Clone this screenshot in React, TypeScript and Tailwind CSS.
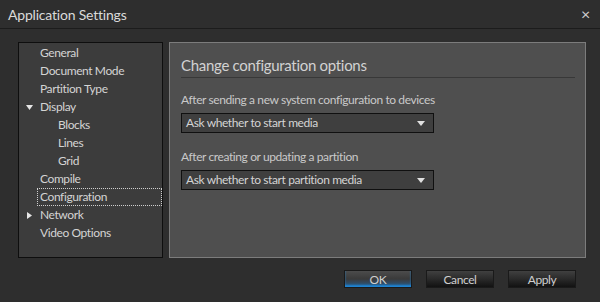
import React from "react";

// Tree entries for the left navigation pane
interface TreeItem {
    id: number;
    name: string;
    level: number;
    arrow?: "down" | "right";
    focused?: boolean;
}

const treeItems: TreeItem[] = [
    { id: 1, name: "General", level: 0 },
    { id: 2, name: "Document Mode", level: 0 },
    { id: 3, name: "Partition Type", level: 0 },
    { id: 4, name: "Display", level: 0, arrow: "down" },
    { id: 5, name: "Blocks", level: 1 },
    { id: 6, name: "Lines", level: 1 },
    { id: 7, name: "Grid", level: 1 },
    { id: 8, name: "Compile", level: 0 },
    { id: 9, name: "Configuration", level: 0, focused: true },
    { id: 10, name: "Network", level: 0, arrow: "right" },
    { id: 11, name: "Video Options", level: 0 },
];

const Arrow = ({ dir }: { dir: "down" | "right" }) => (
    <svg width="7" height="7" viewBox="0 0 7 7" className="absolute left-[7px] top-[6px]">
        {dir === "down" ? (
            <polygon points="0,1 7,1 3.5,6" fill="#e6e6e6" />
        ) : (
            <polygon points="1,0 6,3.5 1,7" fill="#e6e6e6" />
        )}
    </svg>
);

const Select = ({ value }: { value: string }) => (
    <div className="flex items-center justify-between h-[20px] w-[253px] border border-[#101010] bg-[#3f3f3f] pl-[4px] pr-[8px] text-[12px] tracking-[-0.4px] text-[#d4d4d4]">
        <span>{value}</span>
        <svg width="8" height="5" viewBox="0 0 8 5">
            <polygon points="0,0 8,0 4,5" fill="#e0e0e0" />
        </svg>
    </div>
);

const DialogButton = ({ label, primary }: { label: string; primary?: boolean }) => (
    <button
        className={
            primary
                ? "relative h-[18px] w-[68px] border border-[#1a1a1a] bg-gradient-to-b from-[#4c4c4c] via-[#3a3a3a] to-[#1c5a8c] text-[12px] text-[#cfcfcf] shadow-[inset_0_-2px_2px_#1f86d6]"
                : "h-[18px] w-[68px] border border-[#1a1a1a] bg-gradient-to-b from-[#404040] via-[#2a2a2a] to-[#121212] text-[12px] text-[#cfcfcf]"
        }
    >
        {label}
    </button>
);

export default function App() {
    return (
        <div
            className="flex h-[302px] w-[600px] flex-col bg-[#2e2e2e] text-[12px] tracking-[-0.4px]"
            style={{ fontFamily: 'Lato, "Open Sans", sans-serif' }}
        >
            {/* Title bar */}
            <div className="flex h-[29px] items-center justify-between border-b border-[#1c1c1c] pl-[8px] pr-[10px]">
                <span className="text-[14px] tracking-[-0.2px] text-[#dadada]">Application Settings</span>
                <span className="text-[16px] leading-none text-[#cfcfcf]">×</span>
            </div>

            {/* Body */}
            <div className="flex flex-1 flex-col pl-[18px] pr-[14px] pt-[13px]">
                <div className="flex h-[216px] gap-[6px]">
                    {/* Tree */}
                    <div className="w-[145px] border border-[#0e0e0e] bg-[#3c3c3c] pt-px">
                        {treeItems.map(item => (
                            <div key={item.id} className="relative flex h-[18px] items-center">
                                {item.arrow && <Arrow dir={item.arrow} />}
                                <span
                                    className={
                                        item.focused
                                            ? "flex h-[18px] flex-1 items-center border border-dotted border-[#cfcfcf] pl-[2px] ml-[18px] text-[#d4d4d4]"
                                            : item.level === 1
                                              ? "pl-[39px] text-[#d4d4d4]"
                                              : "pl-[21px] text-[#d4d4d4]"
                                    }
                                >
                                    {item.name}
                                </span>
                            </div>
                        ))}
                    </div>

                    {/* Options panel */}
                    <div className="flex-1 border border-[#7c7c7c] bg-[#4f4f4f] pl-[11px] pr-[10px] pt-[12px]">
                        <div className="border-b border-[#383838] pb-[2px] text-[15px] leading-[20px] tracking-[-0.3px] text-[#d2d2d2]">
                            Change configuration options
                        </div>
                        <div className="mt-[14px] leading-[16px] text-[#c9c9c9]">
                            After sending a new system configuration to devices
                        </div>
                        <div className="mt-[5px]">
                            <Select value="Ask whether to start media" />
                        </div>
                        <div className="mt-[16px] leading-[16px] text-[#c9c9c9]">
                            After creating or updating a partition
                        </div>
                        <div className="mt-[5px]">
                            <Select value="Ask whether to start partition media" />
                        </div>
                    </div>
                </div>

                {/* Buttons */}
                <div className="mt-[12px] flex justify-end gap-[14px] pr-[10px]">
                    <DialogButton label="OK" primary />
                    <DialogButton label="Cancel" />
                    <DialogButton label="Apply" />
                </div>
            </div>
        </div>
    );
}
